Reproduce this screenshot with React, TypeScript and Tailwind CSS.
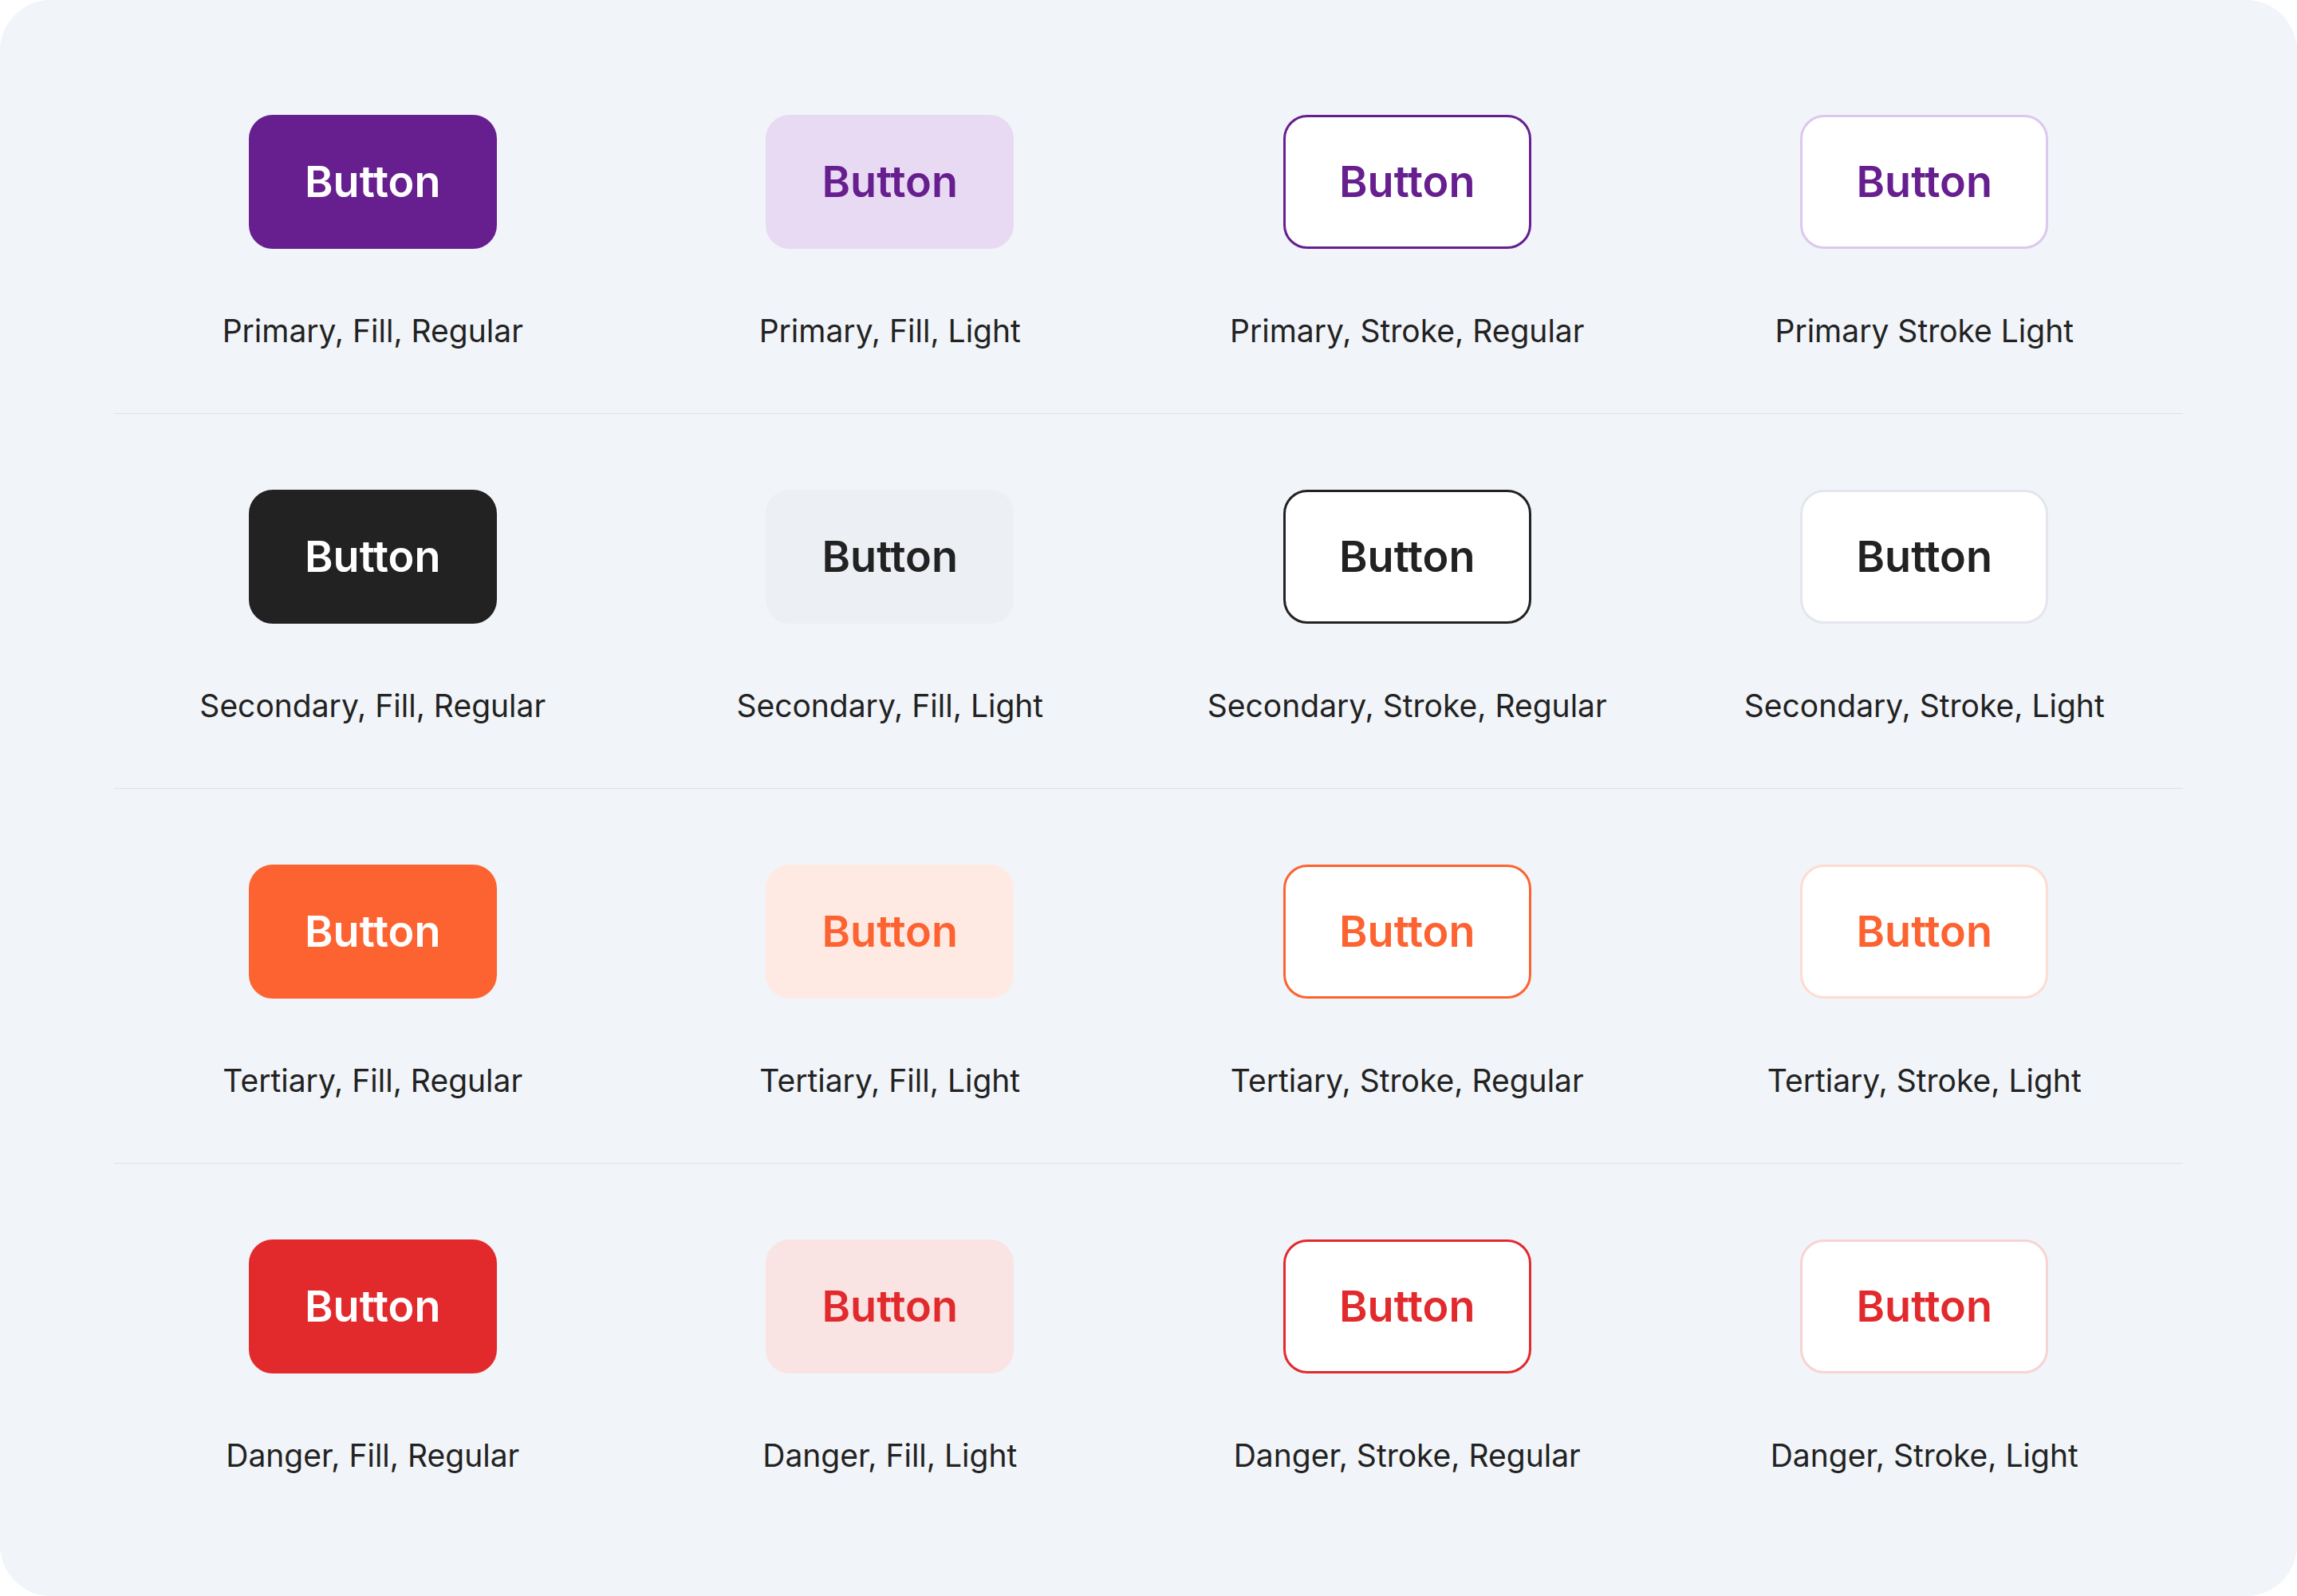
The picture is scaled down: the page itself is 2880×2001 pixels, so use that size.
import React from "react";

type Variant = {
  label: string;
  className: string;
};

type Row = Variant[];

const rows: Row[] = [
  [
    { label: "Primary, Fill, Regular", className: "bg-[#671f90] text-white border-[#671f90]" },
    { label: "Primary, Fill, Light", className: "bg-[#e9daf3] text-[#671f90] border-[#e9daf3]" },
    { label: "Primary, Stroke, Regular", className: "bg-white text-[#671f90] border-[#671f90]" },
    { label: "Primary Stroke Light", className: "bg-white text-[#671f90] border-[#dcc8ec]" },
  ],
  [
    { label: "Secondary, Fill, Regular", className: "bg-[#222222] text-white border-[#222222]" },
    { label: "Secondary, Fill, Light", className: "bg-[#eceff3] text-[#222222] border-[#eceff3]" },
    { label: "Secondary, Stroke, Regular", className: "bg-white text-[#222222] border-[#222222]" },
    { label: "Secondary, Stroke, Light", className: "bg-white text-[#222222] border-[#e3e6ec]" },
  ],
  [
    { label: "Tertiary, Fill, Regular", className: "bg-[#fd6331] text-white border-[#fd6331]" },
    { label: "Tertiary, Fill, Light", className: "bg-[#ffeae3] text-[#fd6331] border-[#ffeae3]" },
    { label: "Tertiary, Stroke, Regular", className: "bg-white text-[#fd6331] border-[#fd6331]" },
    { label: "Tertiary, Stroke, Light", className: "bg-white text-[#fd6331] border-[#fddcd2]" },
  ],
  [
    { label: "Danger, Fill, Regular", className: "bg-[#e22a2d] text-white border-[#e22a2d]" },
    { label: "Danger, Fill, Light", className: "bg-[#fae3e3] text-[#e22a2d] border-[#fae3e3]" },
    { label: "Danger, Stroke, Regular", className: "bg-white text-[#e22a2d] border-[#e22a2d]" },
    { label: "Danger, Stroke, Light", className: "bg-white text-[#e22a2d] border-[#f8d3d3]" },
  ],
];

function Cell({ v }: { v: Variant }) {
  return (
    <div className="flex flex-col items-center">
      <button
        className={
          "flex h-[168px] w-[311px] items-center justify-center rounded-[30px] border-[3px] text-[54px] font-semibold leading-none " +
          v.className
        }
      >
        Button
      </button>
      <div className="mt-[79px] text-[39px] leading-[48px] text-[#222222]">{v.label}</div>
    </div>
  );
}

export default function App() {
  return (
    <div className="h-[2001px] w-full overflow-hidden bg-white" style={{ fontFamily: "Inter, 'Noto Sans', sans-serif" }}>
      <div className="h-[2001px] w-full rounded-[64px] bg-[#f1f4f8] px-[143px] pt-[144px]">
        {rows.map((row, i) => (
          <div
            key={i}
            className={
              "grid grid-cols-4 pb-[79px] " + (i > 0 ? "border-t border-[#dde1e6] pt-[95px]" : "")
            }
          >
            {row.map((v) => (
              <Cell key={v.label} v={v} />
            ))}
          </div>
        ))}
      </div>
    </div>
  );
}
